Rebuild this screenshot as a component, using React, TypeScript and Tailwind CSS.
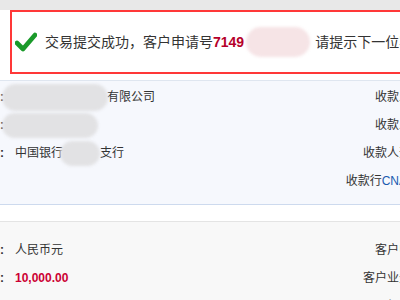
import React from 'react';

type Row = {
  value?: React.ReactNode;
  label: React.ReactNode;
  colon?: boolean;
};

const Blob = ({ w, h = 24, ml = 0, color = 'bg-[#e2e2e4]' }: { w: number; h?: number; ml?: number; color?: string }) => (
  <span
    className={`inline-block rounded-full blur-[1.5px] align-middle ${color}`}
    style={{ width: w, height: h, marginLeft: ml }}
  />
);

function InfoRow({ value, label, colon = true }: Row) {
  return (
    <div className="flex h-[28px] items-center whitespace-nowrap">
      <div className="w-[4px] overflow-hidden font-bold">{colon ? ':' : ''}</div>
      <div className="ml-[11px] flex w-[232px] items-center">{value}</div>
      <div className="w-[200px] text-right">{label}</div>
      <div className="pl-[6px]"></div>
    </div>
  );
}

function App() {
  const payee: Row[] = [
    {
      value: (
        <>
          <Blob w={106} h={27} ml={-13} />
          <span className="ml-[-1px]">有限公司</span>
        </>
      ),
      label: '收款人名称：',
    },
    { value: <Blob w={96} h={25} ml={-13} />, label: '收款人账号：' },
    {
      value: (
        <>
          <span>中国银行</span>
          <Blob w={40} h={25} ml={-3} />
          <span>支行</span>
        </>
      ),
      label: '收款人开户行：',
    },
    {
      colon: false,
      label: (
        <>
          收款行<span className="text-[#1a5bb0]">CNAPS</span>号：
        </>
      ),
    },
  ];

  const money: Row[] = [
    { value: '人民币元', label: '客户申请号：' },
    { value: <span className="font-bold text-[#cc0033]">10,000.00</span>, label: '客户业务编号：' },
    { label: '经办柜员：' },
  ];

  return (
    <div className="h-[300px] w-[400px] overflow-hidden bg-white font-['Liberation_Sans','Noto_Sans_CJK_SC',sans-serif] text-[12px] text-[#333]">
      <div className="w-[900px]">
        <div className="h-[10px] bg-[#e8e8e8]" />
        <div className="ml-[10px] flex h-[64px] items-center border-2 border-[#ff3838] bg-white pl-[3px]">
          <svg width="22" height="20" viewBox="0 0 22 20" className="mr-[8px]">
            <path d="M2 11 L8 17 L20 3" fill="none" stroke="#1a9a2a" strokeWidth="4.6" strokeLinecap="round" strokeLinejoin="round" />
          </svg>
          <span className="text-[14px] text-[#333]">交易提交成功，客户申请号</span>
          <span className="text-[14px] font-bold text-[#b5002a]">7149</span>
          <Blob w={64} h={30} ml={2} color="bg-[#f6e4e6]" />
          <span className="ml-[5px] text-[14px] text-[#333]">请提示下一位客户</span>
        </div>
        <div className="h-[6px]" />
        <div className="border-y border-t-[#dfe6f0] border-b-[#cddaee] bg-[#f6f8fd] pb-[9px] pt-[2px]">
          {payee.map((r, i) => (
            <InfoRow key={i} {...r} />
          ))}
        </div>
        <div className="h-[16px]" />
        <div className="border-t border-[#e4e4e4] bg-[#f8f8f8] pt-[14px]">
          {money.map((r, i) => (
            <InfoRow key={i} {...r} />
          ))}
        </div>
      </div>
    </div>
  );
}

export default App;
